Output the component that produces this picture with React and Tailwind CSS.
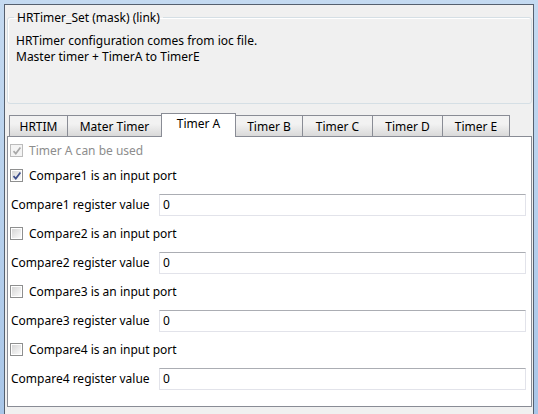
import React from "react";

function Check({ checked, disabled }) {
  return (
    <span
      className={`relative inline-flex h-[13px] w-[13px] shrink-0 items-center justify-center border ${
        disabled ? "border-[#bcbcbc] bg-[#f4f4f4]" : "border-[#8e8f8f] bg-white"
      }`}
    >
      <span
        className={`h-[9px] w-[9px] ${
          disabled
            ? "bg-[#f4f4f4]"
            : "bg-linear-to-br from-[#d6d6d6] to-[#fbfbfb]"
        }`}
      />
      {checked && (
        <svg
          className="absolute left-[1px] top-[1px]"
          width="10"
          height="10"
          viewBox="0 0 10 10"
        >
          <path
            d="M1.5 5.2 L3.8 7.6 L8.4 1.6"
            fill="none"
            stroke={disabled ? "#a8a8a8" : "#3c4d8a"}
            strokeWidth="1.7"
          />
        </svg>
      )}
    </span>
  );
}

function CheckRow({ label, checked, disabled }) {
  return (
    <div className="flex h-[25px] items-center pl-[2px]">
      <Check checked={checked} disabled={disabled} />
      <span className={`ml-[6px] ${disabled ? "text-[#8d8d8d]" : "text-black"}`}>
        {label}
      </span>
    </div>
  );
}

function InputRow({ label }) {
  return (
    <div className="flex h-[33px] items-center pl-[3px] pr-[5px]">
      <span className="w-[148px] shrink-0">{label}</span>
      <div className="flex h-[22px] flex-1 items-center border border-[#e2e3ea] border-t-[#abadb3] bg-white pl-[3px]">
        0
      </div>
    </div>
  );
}

const tabs = [
  { name: "HRTIM", w: "w-[59px]" },
  { name: "Mater Timer", w: "w-[95px]" },
  { name: "Timer A", w: "w-[75px]", sel: true },
  { name: "Timer B", w: "w-[68px]" },
  { name: "Timer C", w: "w-[71px]" },
  { name: "Timer D", w: "w-[71px]" },
  { name: "Timer E", w: "w-[68px]" },
];

export default function App() {
  return (
    <div
      className="h-[414px] w-[538px] overflow-hidden bg-linear-to-b from-[#c4daf1] to-[#a9c6e8] px-[4px] pt-[4px] text-[12px] leading-[15px] text-black"
      style={{ fontFamily: '"Noto Sans", "Open Sans", sans-serif' }}
    >
      <div className="flex h-full flex-col border-l border-r border-t border-[#55606f] bg-[#f0f0f0]">
        <fieldset className="ml-[2px] mr-[1px] mt-[5px] h-[94px] rounded-[3px] border border-[#d5dfe5] px-[8px] shadow-[inset_1px_1px_0_#ffffff]">
          <legend className="ml-[-2px] px-[3px]">HRTimer_Set (mask) (link)</legend>
          <div className="mt-[8px] leading-[16px]">
            <div>HRTimer configuration comes from ioc file.</div>
            <div>Master timer + TimerA to TimerE</div>
          </div>
        </fieldset>

        <div className="ml-[2px] mr-[1px] mt-[8px] flex flex-col">
          <div className="flex h-[24px] items-end pl-[2px]">
            {tabs.map((t, i) =>
              t.sel ? (
                <div
                  key={t.name}
                  className={`relative z-10 -mb-px -ml-px flex h-[24px] ${t.w} items-start justify-center border border-b-0 border-[#898c95] bg-white pt-[2px]`}
                >
                  {t.name}
                </div>
              ) : (
                <div
                  key={t.name}
                  className={`flex h-[21px] ${t.w} ${
                    i === 0 ? "" : "-ml-px"
                  } items-center justify-center border border-b-0 border-[#898c95] bg-linear-to-b from-[#f2f2f2] from-40% to-[#d9d9d9] pt-[1px]`}
                >
                  {t.name}
                </div>
              )
            )}
          </div>
          <div className="border border-[#898c95] bg-white pb-[11px] pt-[1px]">
            <CheckRow label="Timer A can be used" checked disabled />
            <CheckRow label="Compare1 is an input port" checked />
            <InputRow label="Compare1 register value" />
            <CheckRow label="Compare2 is an input port" />
            <InputRow label="Compare2 register value" />
            <CheckRow label="Compare3 is an input port" />
            <InputRow label="Compare3 register value" />
            <CheckRow label="Compare4 is an input port" />
            <InputRow label="Compare4 register value" />
          </div>
        </div>
      </div>
    </div>
  );
}
